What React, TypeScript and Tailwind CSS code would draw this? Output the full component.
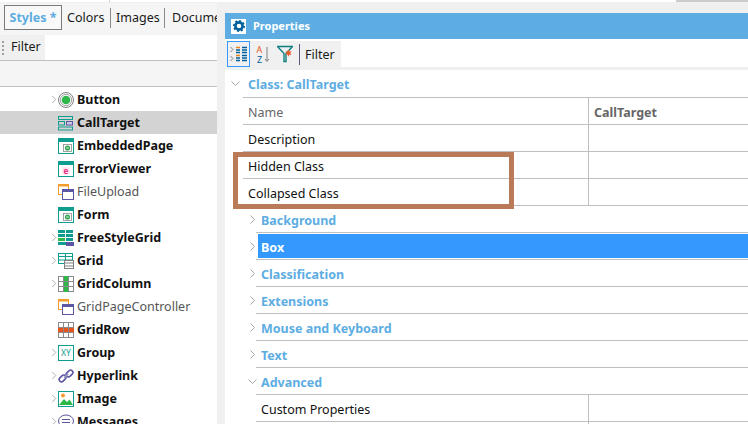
import React from "react";

const Chevron = ({ open = false, className = "" }: { open?: boolean; className?: string }) => (
  <svg width="9" height="9" viewBox="0 0 9 9" className={className} fill="none" stroke="#a6a6a6" strokeWidth="1">
    {open ? <path d="M0.5 2.5 L4.5 6.5 L8.5 2.5" /> : <path d="M2.5 0.5 L6.5 4.5 L2.5 8.5" />}
  </svg>
);

const T = "#0f9d8f";
const P = "#5b57a2";
const O = "#f39c2c";

const Win = ({ children, bar = T }: { children?: React.ReactNode; bar?: string }) => (
  <svg width="16" height="16" viewBox="0 0 16 16">
    <rect x="0.5" y="0.5" width="15" height="15" fill="#fff" stroke={bar} />
    <rect x="0" y="0" width="16" height="4" fill={bar} />
    {children}
  </svg>
);

const icons: Record<string, React.ReactNode> = {
  Button: (
    <svg width="16" height="16" viewBox="0 0 16 16">
      <circle cx="8" cy="8" r="7.5" fill="#fff" stroke="#808080" />
      <circle cx="8" cy="8" r="5.7" fill="none" stroke="#a0a0a0" />
      <circle cx="8" cy="8" r="4.3" fill="#2fb84a" />
    </svg>
  ),
  CallTarget: (
    <svg width="16" height="16" viewBox="0 0 16 16" fill="none">
      <rect x="0.5" y="1.5" width="14" height="3" stroke={T} />
      <rect x="0.5" y="6.5" width="6" height="3.5" stroke={T} />
      <rect x="8.5" y="6.5" width="6" height="3.5" stroke={P} fill="#c9c8e4" />
      <rect x="0.5" y="12" width="14" height="3" stroke={T} />
    </svg>
  ),
  EmbeddedPage: (
    <Win>
      <rect x="5.5" y="6.5" width="8" height="7" fill="#fff" stroke="#8a8a8a" strokeWidth="0.8" />
      <circle cx="9.5" cy="10" r="2.6" fill="#3aa655" />
      <path d="M8 10H11" stroke="#fff" strokeWidth="0.7" />
    </Win>
  ),
  ErrorViewer: (
    <Win>
      <circle cx="8" cy="10" r="4" fill="#ffe3f0" />
      <text x="8" y="12.6" textAnchor="middle" fontSize="8" fontWeight="700" fill="#e5317f">e</text>
    </Win>
  ),
  FileUpload: (
    <svg width="16" height="16" viewBox="0 0 16 16" fill="none">
      <rect x="0.5" y="0.5" width="10" height="10" stroke={O} fill="#fff" />
      <rect x="0" y="0" width="11" height="2.5" fill={O} />
      <rect x="4.5" y="5.5" width="11" height="10" stroke={P} fill="#fff" />
      <rect x="4" y="5" width="12" height="3" fill={P} />
    </svg>
  ),
  FreeStyleGrid: (
    <svg width="16" height="16" viewBox="0 0 16 16">
      <rect x="0" y="0" width="15" height="7" fill={T} />
      <rect x="0" y="8" width="7" height="3" fill="#2fb84a" />
      <rect x="8" y="8" width="7" height="3" fill={T} />
      <rect x="0" y="12" width="8" height="3" fill={T} />
      <rect x="8" y="12" width="8" height="4" fill={P} />
      <rect x="7" y="0" width="1" height="7" fill="#fff" />
      <rect x="0" y="3" width="15" height="1" fill="#fff" />
    </svg>
  ),
  Grid: (
    <svg width="16" height="16" viewBox="0 0 16 16" fill="#fff">
      <rect x="0.5" y="0.5" width="14" height="10" stroke={T} />
      <path d="M0.5 3.5H14.5M0.5 7H14.5M7.5 0.5V10.5" stroke={T} />
      <rect x="6.5" y="7.5" width="9" height="8" stroke="#808080" />
      <path d="M6.5 10H15.5M6.5 13H15.5" stroke="#808080" />
    </svg>
  ),
  GridColumn: (
    <svg width="16" height="16" viewBox="0 0 16 16" fill="none">
      <rect x="0.5" y="0.5" width="15" height="15" stroke="#8a8a8a" />
      <rect x="6" y="0" width="5" height="16" fill="#2fb84a" />
      <path d="M5.5 0.5V15.5M10.5 0.5V15.5M0.5 5.5H15.5M0.5 10.5H15.5" stroke="#8a8a8a" />
    </svg>
  ),
  GridRow: (
    <svg width="16" height="16" viewBox="0 0 16 16" fill="none">
      <rect x="0.5" y="0.5" width="15" height="15" stroke="#8a8a8a" />
      <rect x="0" y="5" width="16" height="6" fill="#e8541e" />
      <path d="M5.5 0.5V15.5M10.5 0.5V15.5M0.5 5.5H15.5M0.5 10.5H15.5" stroke="#8a8a8a" />
    </svg>
  ),
  Group: (
    <svg width="16" height="16" viewBox="0 0 16 16">
      <rect x="0.5" y="0.5" width="15" height="15" fill="#fff" stroke={T} />
      <text x="8" y="11" textAnchor="middle" fontSize="8.5" fill={T}>XY</text>
    </svg>
  ),
  Hyperlink: (
    <svg width="16" height="16" viewBox="0 0 16 16" fill="none" stroke={P} strokeWidth="1.6">
      <rect x="0.8" y="8.2" width="7.5" height="4.6" rx="2.3" transform="rotate(-45 4.5 10.5)" />
      <rect x="7.8" y="3.2" width="7.5" height="4.6" rx="2.3" transform="rotate(-45 11.5 5.5)" />
      <path d="M6 10L10 6" stroke="#9a9ac8" />
    </svg>
  ),
  Image: (
    <svg width="16" height="16" viewBox="0 0 16 16">
      <rect x="0.5" y="0.5" width="15" height="15" fill="#fff" stroke={T} />
      <circle cx="5" cy="4.5" r="2" fill={O} />
      <path d="M1 14L6 8L9 11L11.5 8.5L15 14Z" fill="#2fb84a" />
    </svg>
  ),
  Messages: (
    <svg width="16" height="16" viewBox="0 0 16 16" fill="none" stroke={P}>
      <ellipse cx="8" cy="7" rx="7.5" ry="6" fill="#fff" />
      <path d="M4 5.5H12M4 8.5H12" />
    </svg>
  ),
};
icons.Form = icons.EmbeddedPage;
icons.GridPageController = icons.FileUpload;

const tree: { name: string; arrow?: boolean; light?: boolean; selected?: boolean }[] = [
  { name: "Button", arrow: true },
  { name: "CallTarget", selected: true },
  { name: "EmbeddedPage" },
  { name: "ErrorViewer" },
  { name: "FileUpload", light: true },
  { name: "Form" },
  { name: "FreeStyleGrid", arrow: true },
  { name: "Grid", arrow: true },
  { name: "GridColumn", arrow: true },
  { name: "GridPageController", light: true },
  { name: "GridRow" },
  { name: "Group", arrow: true },
  { name: "Hyperlink", arrow: true },
  { name: "Image", arrow: true },
  { name: "Messages", arrow: true },
];

const line = "border-b border-[#bfbfbf]";

const Section = ({ name, open, active }: { name: string; open?: boolean; active?: boolean }) => (
  <div className={`h-[27px] shrink-0 ml-[31px] ${line} flex items-center`}>
    <Chevron open={open} className="ml-[-8px] mr-[1px] shrink-0" />
    <div
      className={`flex-1 h-[24px] pl-[3px] pt-[5px] flex items-center font-bold text-[12.5px] ${
        active ? "bg-[#3399ff] text-white" : "text-[#5dade2]"
      }`}
    >
      {name}
    </div>
  </div>
);

const PropRow = ({ name, muted, bold }: { name: string; muted?: boolean; bold?: string }) => (
  <div className={`h-[27px] shrink-0 ml-[18px] flex ${line}`}>
    <div className={`w-[345px] pl-[5px] pt-[4px] flex items-center text-[12.5px] ${muted ? "text-[#666666]" : "text-[#111111]"}`}>{name}</div>
    <div className="flex-1 border-l border-[#bfbfbf] pl-[5px] pt-[4px] flex items-center text-[12.5px] font-bold text-[#666666]">{bold}</div>
  </div>
);

export default function App() {
  return (
    <div
      className="w-[748px] h-[424px] overflow-hidden bg-[#f0f0f0] flex flex-col relative"
      style={{ fontFamily: '"Noto Sans", "Open Sans", sans-serif' }}
    >
      <div className="h-[3px] shrink-0 flex bg-white border-b border-[#f0f0f0]">
        <div className="w-[110px] border-r border-[#d0d0d0]" />
        <div className="flex-1" />
        <div className="w-[72px] bg-[#cccccc]" />
      </div>
      <div className="flex-1 flex min-h-0">
        {/* left */}
        <div className="w-[217px] shrink-0 flex flex-col bg-white">
          <div className="h-[32px] shrink-0 bg-[#f5f5f5] pt-[2px] flex items-start overflow-hidden text-[12.5px] text-[#1a1a1a] whitespace-nowrap">
            <div className="ml-[4px] w-[58px] h-[25px] pt-[2px] shrink-0 border border-[#7a7a7a] bg-[#f8f8f8] flex items-center justify-center font-bold text-[#5dade2]">
              Styles *
            </div>
            <div className="h-[25px] w-[48px] pt-[2px] shrink-0 pl-[5px] flex items-center">Colors</div>
            <div className="h-[20px] mt-[3px] shrink-0 border-l border-[#8a8a8a]" />
            <div className="h-[25px] w-[53px] pt-[2px] shrink-0 pl-[5px] flex items-center">Images</div>
            <div className="h-[20px] mt-[3px] shrink-0 border-l border-[#8a8a8a]" />
            <div className="h-[25px] pl-[7px] pt-[2px] shrink-0 flex items-center">Documents</div>
          </div>
          <div className="h-[26px] shrink-0 flex border-b border-[#bfbfbf]">
            <div className="w-[45px] bg-[#f0f0f0] flex items-center text-[12.5px] text-[#1a1a1a]">
              <span className="w-[3px] h-[14px] ml-[2px] mr-[6px] border-l-2 border-dotted border-[#a0a0a0]" />
              Filter
            </div>
          </div>
          <div className={`h-[26px] shrink-0 bg-[#f5f5f5] ${line}`} />
          <div className="pt-[1px] flex flex-col">
            {tree.map((r) => (
              <div key={r.name} className={`h-[23px] shrink-0 flex items-center pl-[50px] ${r.selected ? "bg-[#d3d3d3]" : ""}`}>
                <span className="w-[8px] shrink-0 flex">{r.arrow && <Chevron />}</span>
                <span className="w-[19px] shrink-0 flex">{icons[r.name]}</span>
                <span className={`text-[12.5px] pt-[2px] whitespace-nowrap ${r.light ? "text-[#555555]" : "font-bold text-[#111111]"}`}>{r.name}</span>
              </div>
            ))}
          </div>
        </div>
        {/* right */}
        <div className="flex-1 pl-[8px] pt-[10px] flex flex-col min-w-0">
          <div className="flex-1 bg-white flex flex-col min-h-0">
            <div className="h-[26px] shrink-0 bg-[#5dade2] flex items-center">
              <div className="ml-[6px] w-[15px] h-[15px] bg-white flex items-center justify-center">
                <svg width="12" height="12" viewBox="0 0 12 12">
                  <circle cx="6" cy="6" r="3.6" fill="none" stroke="#00609c" strokeWidth="2.6" />
                  <circle cx="6" cy="6" r="5.2" fill="none" stroke="#00609c" strokeWidth="1.6" strokeDasharray="2 2" />
                </svg>
              </div>
              <span className="ml-[7px] text-[11px] font-bold text-white">Properties</span>
            </div>
            <div className="h-[2px] shrink-0 bg-white" />
            <div className="h-[26px] shrink-0 flex">
              <div className="w-[116px] bg-[#f0f0f0] flex items-center text-[12.5px] text-[#1a1a1a]">
                <div className="ml-[2px] w-[23px] h-[26px] border border-[#3399ff] flex items-center justify-center">
                  <svg width="18" height="16" viewBox="0 0 18 16" fill="none">
                    <path d="M0.5 1L3 3.5L0.5 6M0.5 10L3 12.5L0.5 15" stroke="#808080" />
                    <path d="M6 1.5H10M6 9.5H10" stroke="#e8821e" strokeWidth="1.4" />
                    <path d="M6 4H10M6 6.5H10M6 12H10M6 14.5H10M12 1.5H17M12 4H17M12 6.5H17M12 9.5H17M12 12H17M12 14.5H17" stroke="#00609c" strokeWidth="1.4" />
                  </svg>
                </div>
                <svg width="16" height="20" viewBox="0 0 16 20" fill="none" className="ml-[5px]">
                  <text x="4.5" y="9" textAnchor="middle" fontSize="9" fill="#e8541e">A</text>
                  <text x="4.5" y="19" textAnchor="middle" fontSize="9" fill="#00609c">Z</text>
                  <path d="M12 3V17M10 15L12 17.5L14 15" stroke="#808080" />
                </svg>
                <svg width="16" height="18" viewBox="0 0 16 18" fill="none" className="ml-[6px]">
                  <path d="M0.5 1.5H15.5L9 8.5V16.5H7V8.5Z" stroke="#0f7f7f" strokeWidth="1.4" />
                  <path d="M11.5 4.5L12.3 6.6L14.6 6.2L13.3 8.1L14.6 10L12.3 9.6L11.5 11.7L10.5 9.6L8.6 10L9.7 8.1L8.6 6.2L10.5 6.6Z" fill="#f05a28" />
                </svg>
                <div className="ml-[6px] h-[21px] border-l border-[#5a5a7a]" />
                <span className="ml-[5px] pt-[2px]">Filter</span>
              </div>
            </div>
            <div className="h-[3px] shrink-0 bg-[#f0f0f0]" />
            <div className={`h-[28px] shrink-0 ml-[18px] flex items-center ${line}`}>
              <Chevron open className="ml-[-12px] shrink-0" />
              <span className="ml-[8px] pt-[4px] text-[12.5px] font-bold text-[#5dade2]">Class: CallTarget</span>
            </div>
            <PropRow name="Name" muted bold="CallTarget" />
            <PropRow name="Description" />
            <PropRow name="Hidden Class" />
            <PropRow name="Collapsed Class" />
            <Section name="Background" />
            <Section name="Box" active />
            <Section name="Classification" />
            <Section name="Extensions" />
            <Section name="Mouse and Keyboard" />
            <Section name="Text" />
            <Section name="Advanced" open />
            <div className={`h-[27px] shrink-0 ml-[31px] flex ${line}`}>
              <div className="w-[332px] pl-[5px] pt-[4px] flex items-center text-[12.5px] text-[#111111]">Custom Properties</div>
              <div className="flex-1 border-l border-[#bfbfbf]" />
            </div>
            <div className="flex-1 ml-[31px] flex">
              <div className="w-[332px]" />
              <div className="flex-1 border-l border-[#bfbfbf]" />
            </div>
          </div>
        </div>
      </div>
      <div className="absolute left-[233px] top-[152px] w-[281px] h-[57px] border-[5px] border-[#b97a57]" />
    </div>
  );
}
